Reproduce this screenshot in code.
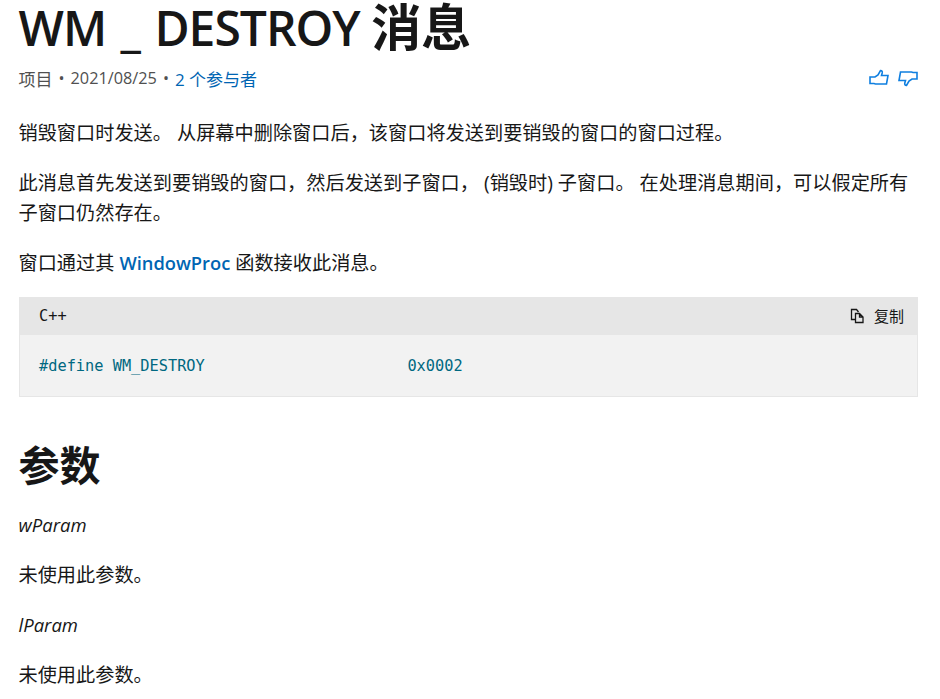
<main class="page">
  <h1>WM _ DESTROY <span class="cjk">消息</span></h1>
  <div class="meta">
    <div class="byline">
      <span>项目</span><span class="dot">•</span><span class="date">2021/08/25</span><span class="dot">•</span><a href="#c">2 个参与者</a>
    </div>
    <div class="thumbs">
      <svg width="20" height="18" viewBox="0 0 20 18" aria-hidden="true"><path d="M1 8h5l3-2 2.500-4.500c1.500 0 2 1.200 1.700 2.500L12.500 6.500H19l-1.500 8.500H6.500L5 14.500H1z" /></svg>
      <svg width="20" height="18" viewBox="0 0 20 18" aria-hidden="true"><path d="M19 10h-5l-3 2-2.500 4.500c-1.500 0-2-1.200-1.700-2.500L7.500 11.500H1L2.500 3h11l1.500.5h4z" /></svg>
    </div>
  </div>
  <p>销毁窗口时发送。 从屏幕中删除窗口后，该窗口将发送到要销毁的窗口的窗口过程。</p>
  <p>此消息首先发送到要销毁的窗口，然后发送到子窗口， (销毁时) 子窗口。 在处理消息期间，可以假定所有子窗口仍然存在。</p>
  <p class="before-code">窗口通过其 <a class="strong" href="#w">WindowProc</a> 函数接收此消息。</p>
  <div class="code">
    <div class="code-head">
      <span class="lang">C++</span>
      <span class="copy">
        <svg width="16" height="16" viewBox="0 0 16 16" aria-hidden="true"><path d="M5.500 11.500H1.500V1.500h5l2 2.500M5.500 5.500h4l3.500 3.500v5.500H5.500zM9.500 5.500V9H13" /></svg>
        <span class="copy-label">复制</span>
      </span>
    </div>
    <pre class="code-body">#define WM_DESTROY                      0x0002</pre>
  </div>
  <h2>参数</h2>
  <p class="latin"><i>wParam</i></p>
  <p>未使用此参数。</p>
  <p class="latin"><i>lParam</i></p>
  <p>未使用此参数。</p>
</main>

<style>
  :global(body) { margin: 0; background: #fff; }
  .page {
    height: 699px;
    overflow: hidden;
    padding: 0 22px 0 18.500px;
    font-family: "Open Sans", "Noto Sans CJK SC", sans-serif;
    color: #171717;
    font-size: 19.200px;
    box-sizing: border-box;
  }
  h1 {
    margin: -6px 0 0;
    font-size: 48px;
    line-height: 68px;
    font-weight: 600;
    letter-spacing: -1px;
    word-spacing: 3px;
    white-space: nowrap;
  }
  .cjk { font-size: 50px; letter-spacing: 0; line-height: 1; margin-left: -3px; }
  .meta {
    display: flex;
    justify-content: space-between;
    align-items: center;
    height: 26px;
    margin-top: 3px;
    font-size: 17px;
    color: #505050;
  }
  .byline { display: flex; align-items: center; }
  .date { font-size: 16.300px; }
  .dot { margin: 0 6px; font-size: 16px; }
  a { color: #0065b3; text-decoration: none; }
  .strong { font-weight: 600; font-size: 18.300px; }
  .latin { font-size: 18.500px; }
  .thumbs { display: flex; gap: 9px; }
  .thumbs svg { fill: none; stroke: #0f7fe0; stroke-width: 1.600; }
  p { margin: 0 0 20px; line-height: 30px; }
  .meta + p { margin-top: 27px; }
  .before-code { margin-bottom: 19px; }
  .code { margin-left: 0.500px; background: #f2f2f2; border: 1px solid #e6e6e6; border-top: 0; }
  .code-head {
    display: flex;
    justify-content: space-between;
    align-items: center;
    height: 38px;
    margin: 0 -1px;
    padding: 0 14px 0 20px;
    background: #e6e6e6;
    font-size: 15px;
  }
  .lang { font-family: "DejaVu Sans Mono", monospace; font-size: 15.300px; }
  .copy { display: flex; align-items: center; gap: 8px; }
  .copy svg { fill: none; stroke: #171717; stroke-width: 1.300; }
  .copy-label { margin-top: -2px; }
  .code-body {
    margin: 0;
    height: 61px;
    padding: 1px 19px 0;
    box-sizing: border-box;
    line-height: 61px;
    font-family: "DejaVu Sans Mono", monospace;
    font-size: 15.300px;
    color: #006881;
  }
  h2 {
    margin: 38px 0 15px;
    font-size: 41px;
    font-weight: 700;
    line-height: 60px;
  }
</style>
